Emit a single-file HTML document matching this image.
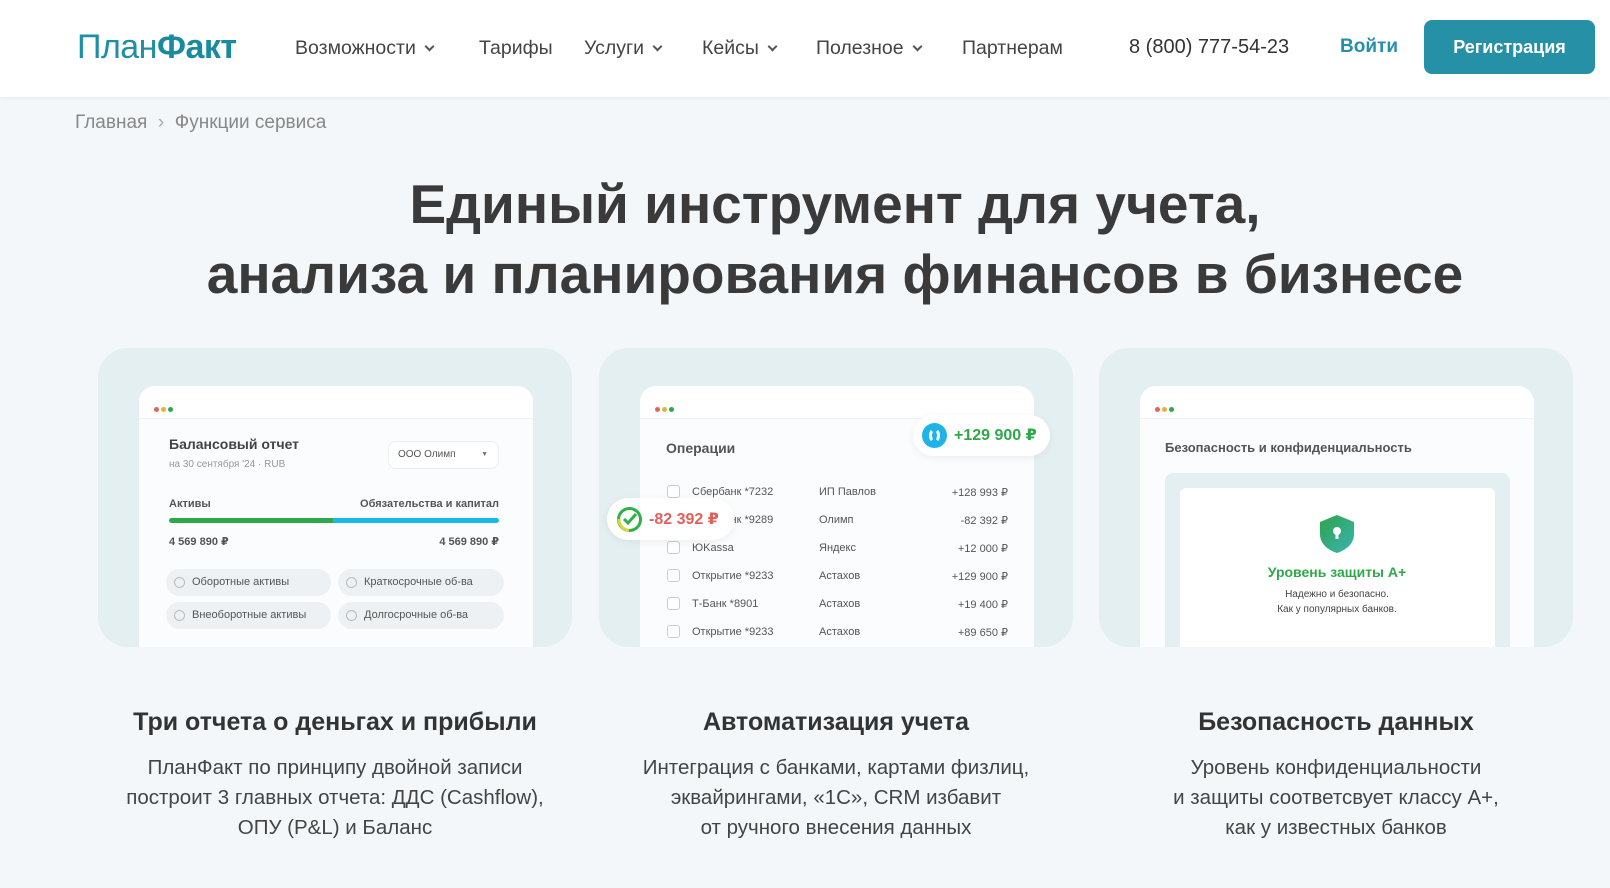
<!DOCTYPE html>
<html><head><meta charset="utf-8"><style>
*{box-sizing:border-box;margin:0;padding:0}
body{width:1610px;height:888px;overflow:hidden;background:#f3f7f9;font-family:"Liberation Sans","DejaVu Sans",sans-serif;color:#333;position:relative}
.a{position:absolute;white-space:nowrap}
header{position:absolute;left:0;top:0;width:1610px;height:97px;background:#fff;box-shadow:0 1px 4px rgba(0,0,0,.06)}
.nav{font-size:19.5px;color:#444;top:37px}
.chev{display:inline-block;width:7px;height:7px;border-right:2px solid #555;border-bottom:2px solid #555;transform:rotate(45deg);margin-left:10px;position:relative;top:-4px}
.card{position:absolute;top:348px;width:474px;height:299px;background:#e3eff1;border-radius:30px;overflow:hidden}
.win{position:absolute;top:38px;left:41px;width:394px;height:270px;background:#fafcfd;border-radius:16px 16px 0 0;overflow:hidden}
.bar{height:33px;background:#fff;border-bottom:1px solid #eef2f4;position:relative}
.dots{position:absolute;left:15px;top:13px}
.dots i{display:inline-block;width:5px;height:5px;border-radius:50%;margin-right:2px}
.s{font-size:11px;color:#555}
.pill{position:absolute;height:27px;border-radius:14px;background:#eef1f3;font-size:11px;color:#555;line-height:27px;padding-left:26px}
.pill:before{content:"";position:absolute;left:8px;top:8px;width:9px;height:9px;border:1px solid #bbb;border-radius:50%}
.cb{position:absolute;width:13px;height:13px;border:1px solid #ccc;border-radius:3px;background:#fff}
h3{position:absolute;top:708px;font-size:25px;font-weight:bold;color:#333;text-align:center;width:474px}
p.d{position:absolute;top:753px;font-size:20.5px;line-height:30px;color:#444;text-align:center;width:474px}
</style></head><body>
<header>
<div class="a" style="left:77px;top:28px;font-size:34px;color:#1e8fa5;letter-spacing:-0.5px">План<b style="color:#1a8aa0">Факт</b></div>
<div class="a nav" style="left:295px">Возможности<span class="chev"></span></div>
<div class="a nav" style="left:479px">Тарифы</div>
<div class="a nav" style="left:584px">Услуги<span class="chev"></span></div>
<div class="a nav" style="left:702px">Кейсы<span class="chev"></span></div>
<div class="a nav" style="left:816px">Полезное<span class="chev"></span></div>
<div class="a nav" style="left:962px">Партнерам</div>
<div class="a" style="left:1129px;top:36px;font-size:20px;color:#333">8 (800) 777-54-23</div>
<div class="a" style="left:1340px;top:36px;font-size:19px;color:#2590a8;font-weight:bold">Войти</div>
<div class="a" style="left:1424px;top:20px;width:171px;height:54px;background:#2690a6;border-radius:8px;color:#fff;font-size:18px;font-weight:bold;text-align:center;line-height:54px">Регистрация</div>
</header>
<div class="a" style="left:75px;top:112px;font-size:19px;color:#888">Главная &nbsp;<span style="color:#aaa">›</span>&nbsp; Функции сервиса</div>
<div class="a" style="left:0;width:1670px;top:169px;text-align:center;font-size:55px;font-weight:bold;color:#3a3a3a;line-height:70px">Единый инструмент для учета,<br>анализа и планирования финансов в бизнесе</div>

<div class="card" style="left:98px">
 <div class="win">
  <div class="bar"><div class="dots"><i style="background:#e0665a"></i><i style="background:#e8b040"></i><i style="background:#30a84a"></i></div></div>
  <div class="a" style="left:30px;top:50px;font-size:14px;font-weight:bold;color:#444">Балансовый отчет</div>
  <div class="a" style="left:30px;top:73px;font-size:10px;color:#999">на 30 сентября '24 · RUB</div>
  <div class="a" style="left:249px;top:55px;width:111px;height:28px;border:1px solid #eceff1;border-radius:8px;background:#fff;font-size:10px;color:#555;line-height:26px;padding-left:9px">ООО Олимп<span style="position:absolute;right:10px;font-size:7px;color:#777">▼</span></div>
  <div class="a s" style="left:30px;top:112px;font-weight:bold">Активы</div>
  <div class="a s" style="right:34px;top:112px;font-weight:bold">Обязательства и капитал</div>
  <div class="a" style="left:30px;top:132px;width:164px;height:5px;background:#2fa84a;border-radius:3px 0 0 3px"></div>
  <div class="a" style="left:194px;top:132px;width:166px;height:5px;background:#16b9e8;border-radius:0 3px 3px 0"></div>
  <div class="a s" style="left:30px;top:149px;font-weight:bold">4 569 890 ₽</div>
  <div class="a s" style="right:34px;top:149px;font-weight:bold">4 569 890 ₽</div>
  <div class="pill" style="left:27px;top:183px;width:165px">Оборотные активы</div>
  <div class="pill" style="left:199px;top:183px;width:166px">Краткосрочные об-ва</div>
  <div class="pill" style="left:27px;top:216px;width:165px">Внеоборотные активы</div>
  <div class="pill" style="left:199px;top:216px;width:166px">Долгосрочные об-ва</div>
 </div>
</div>

<div class="card" style="left:599px">
 <div class="win">
  <div class="bar"><div class="dots"><i style="background:#e0665a"></i><i style="background:#e8b040"></i><i style="background:#30a84a"></i></div></div>
  <div class="a" style="left:26px;top:54px;font-size:14px;font-weight:bold;color:#555">Операции</div>
  <div class="cb" style="left:27px;top:99px"></div><div class="a s" style="left:52px;top:100px">Сбербанк *7232</div><div class="a s" style="left:179px;top:100px">ИП Павлов</div><div class="a s" style="right:26px;top:100px">+128 993 ₽</div>
  <div class="a s" style="left:52px;top:128px">Сбербанк *9289</div><div class="a s" style="left:179px;top:128px">Олимп</div><div class="a s" style="right:26px;top:128px">-82 392 ₽</div>
  <div class="cb" style="left:27px;top:155px"></div><div class="a s" style="left:52px;top:156px">ЮKassa</div><div class="a s" style="left:179px;top:156px">Яндекс</div><div class="a s" style="right:26px;top:156px">+12 000 ₽</div>
  <div class="cb" style="left:27px;top:183px"></div><div class="a s" style="left:52px;top:184px">Открытие *9233</div><div class="a s" style="left:179px;top:184px">Астахов</div><div class="a s" style="right:26px;top:184px">+129 900 ₽</div>
  <div class="cb" style="left:27px;top:211px"></div><div class="a s" style="left:52px;top:212px">Т-Банк *8901</div><div class="a s" style="left:179px;top:212px">Астахов</div><div class="a s" style="right:26px;top:212px">+19 400 ₽</div>
  <div class="cb" style="left:27px;top:239px"></div><div class="a s" style="left:52px;top:240px">Открытие *9233</div><div class="a s" style="left:179px;top:240px">Астахов</div><div class="a s" style="right:26px;top:240px">+89 650 ₽</div>
 </div>
 <div class="a" style="left:314px;top:67px;width:137px;height:41px;background:#fff;border-radius:21px;box-shadow:0 2px 8px rgba(0,0,0,.06)">
  <div class="a" style="left:9px;top:8px;width:25px;height:25px;border-radius:50%;background:#1fb4e8"><div class="a" style="left:7px;top:5px;width:11px;height:15px;border:3px solid #fff;border-radius:50%;border-top-color:transparent;border-bottom-color:transparent"></div></div>
  <div class="a" style="left:41px;top:10px;font-size:16px;font-weight:bold;color:#2fa84a">+129 900 ₽</div>
 </div>
 <div class="a" style="left:8px;top:150px;width:127px;height:42px;background:#fff;border-radius:21px;box-shadow:0 2px 8px rgba(0,0,0,.06)">
  <svg class="a" style="left:9px;top:8px" width="27" height="27" viewBox="0 0 27 27"><circle cx="13.5" cy="13.5" r="11" fill="none" stroke="#2fb04a" stroke-width="3"/><path d="M3 13 A11 11 0 0 0 13 24.5" fill="none" stroke="#d8d83a" stroke-width="3"/><path d="M8 13 l4 4 l8 -9" fill="none" stroke="#2fb04a" stroke-width="3"/></svg>
  <div class="a" style="left:42px;top:11px;font-size:16px;font-weight:bold;color:#e0605a">-82 392 ₽</div>
 </div>
</div>

<div class="card" style="left:1099px">
 <div class="win">
  <div class="bar"><div class="dots"><i style="background:#e0665a"></i><i style="background:#e8b040"></i><i style="background:#30a84a"></i></div></div>
  <div class="a" style="left:25px;top:54px;font-size:13px;font-weight:bold;color:#555">Безопасность и конфиденциальность</div>
  <div class="a" style="left:25px;top:87px;width:345px;height:200px;background:#e3eff1;border-radius:8px"></div>
  <div class="a" style="left:40px;top:102px;width:315px;height:200px;background:#fff;border-radius:6px"></div>
  <svg class="a" style="left:178px;top:128px" width="38" height="40" viewBox="0 0 38 40"><defs><linearGradient id="g" x1="0" y1="0" x2="1" y2="1"><stop offset="0" stop-color="#2ea34a"/><stop offset="1" stop-color="#3ab4b4"/></linearGradient></defs><path d="M19 1 L36 8 V20 C36 30 28 36 19 39 C10 36 2 30 2 20 V8 Z" fill="url(#g)"/><circle cx="19" cy="17" r="4" fill="#fff"/><rect x="17.5" y="18" width="3" height="7" fill="#fff"/></svg>
  <div class="a" style="left:0;width:394px;text-align:center;top:178px;font-size:14px;font-weight:bold;color:#2fa84a">Уровень защиты А+</div>
  <div class="a" style="left:0;width:394px;text-align:center;top:201px;font-size:10px;color:#444;line-height:15px">Надежно и безопасно.<br>Как у популярных банков.</div>
 </div>
</div>

<h3 style="left:98px">Три отчета о деньгах и прибыли</h3>
<h3 style="left:599px">Автоматизация учета</h3>
<h3 style="left:1099px">Безопасность данных</h3>
<p class="d" style="left:73px;width:524px">ПланФакт по принципу двойной записи<br>построит 3 главных отчета: ДДС (Cashflow),<br>ОПУ (P&amp;L) и Баланс</p>
<p class="d" style="left:574px;width:524px">Интеграция с банками, картами физлиц,<br>эквайрингами, «1С», CRM избавит<br>от ручного внесения данных</p>
<p class="d" style="left:1074px;width:524px">Уровень конфиденциальности<br>и защиты соответсвует классу А+,<br>как у известных банков</p>
</body></html>
